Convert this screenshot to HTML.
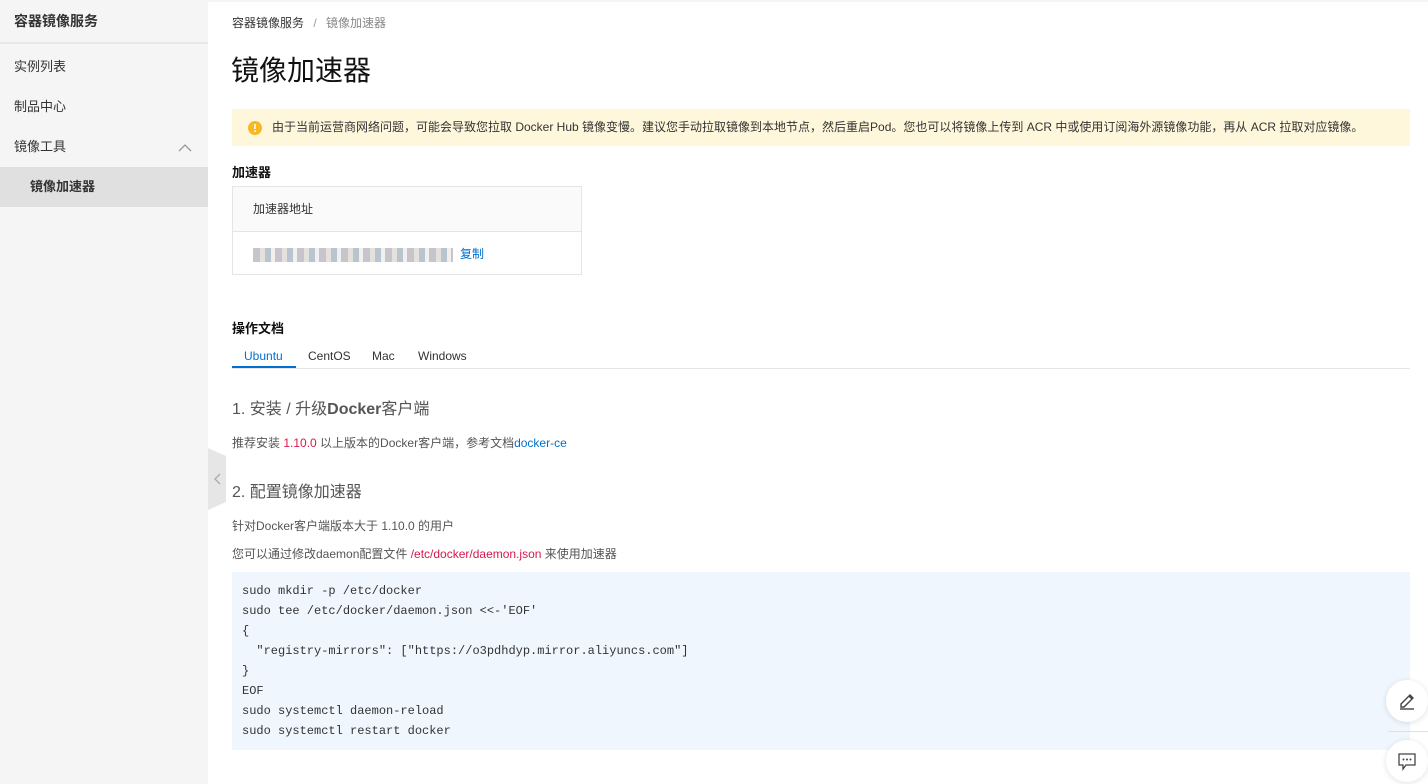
<!DOCTYPE html>
<html><head><meta charset="utf-8"><style>
*{margin:0;padding:0;box-sizing:border-box}
body{width:1428px;height:784px;overflow:hidden;background:#fff;font-family:"Liberation Sans","Noto Sans CJK SC",sans-serif;color:#333;position:relative}
.side{position:absolute;left:0;top:0;width:208px;height:784px;background:#f5f5f5}
.side .t{height:44px;line-height:42px;padding-left:14px;font-size:14px;font-weight:bold;color:#333;border-bottom:2px solid #e8e8e8}
.side .i{height:40px;line-height:40px;padding-left:14px;font-size:13px;color:#333;position:relative}
.side .a{background:#e0e0e0;padding-left:30px;font-weight:bold}
.abs{position:absolute}
.tab{position:absolute;top:349px;font-size:12px;color:#333}
.code{position:absolute;left:232px;top:572px;width:1178px;height:178px;background:#eff6fe;padding:9px 10px;font-family:"Liberation Mono",monospace;font-size:12px;line-height:20px;color:#333;white-space:pre}
</style></head><body>
<div class="abs" style="left:0;top:0;width:1428px;height:2px;background:#f5f5f5"></div>
<div class="side">
<div class="t">容器镜像服务</div>
<div class="i" style="margin-top:3px">实例列表</div>
<div class="i">制品中心</div>
<div class="i">镜像工具<svg style="position:absolute;left:178px;top:16px" width="14" height="9" viewBox="0 0 14 9"><path d="M1 8L7 2L13 8" fill="none" stroke="#999" stroke-width="1.3"/></svg></div>
<div class="i a">镜像加速器</div>
</div>
<svg class="abs" style="left:208px;top:448px" width="19" height="62" viewBox="0 0 19 62"><path d="M0 0L18 8V54L0 62Z" fill="#e6e6e6"/><path d="M12 26L7 31L12 36" fill="none" stroke="#aaa" stroke-width="1.3"/></svg>

<div class="abs" style="left:232px;top:14px;font-size:12px;color:#333">容器镜像服务 <span style="color:#999;margin:0 6px">/</span> <span style="color:#888">镜像加速器</span></div>
<div class="abs" style="left:231px;top:49px;font-size:28px;color:#111">镜像加速器</div>

<div class="abs" style="left:232px;top:109px;width:1178px;height:37px;background:#fff7dc;font-size:12px;line-height:37px;padding-left:40px;color:#333">由于当前运营商网络问题，可能会导致您拉取 Docker Hub 镜像变慢。建议您手动拉取镜像到本地节点，然后重启Pod。您也可以将镜像上传到 ACR 中或使用订阅海外源镜像功能，再从 ACR 拉取对应镜像。</div>
<svg class="abs" style="left:248px;top:121px" width="14" height="14" viewBox="0 0 14 14"><circle cx="7" cy="7" r="7" fill="#f8b823"/><rect x="6.2" y="3" width="1.6" height="5" fill="#fff"/><rect x="6.2" y="9.3" width="1.6" height="1.6" fill="#fff"/></svg>

<div class="abs" style="left:232px;top:162px;font-size:13px;font-weight:bold;color:#111">加速器</div>
<div class="abs" style="left:232px;top:186px;width:350px;height:89px;border:1px solid #e5e5e5">
<div style="height:45px;background:#fafafa;border-bottom:1px solid #e5e5e5;line-height:45px;padding-left:20px;font-size:12px;color:#333">加速器地址</div>
<div style="height:42px;padding:13px 0 0 20px;font-size:12px;white-space:nowrap">
<span style="display:inline-block;vertical-align:middle;width:200px;height:14px;background:repeating-linear-gradient(90deg,#c8c4cc 0 7px,#e4e0dc 7px 12px,#b8c4d0 12px 18px,#f2f0ee 18px 22px)"></span><span style="color:#0070cc;margin-left:7px">复制</span></div>
</div>

<div class="abs" style="left:232px;top:318px;font-size:13px;font-weight:bold;color:#111">操作文档</div>
<div class="tab" style="left:244px;color:#0070cc">Ubuntu</div>
<div class="tab" style="left:308px">CentOS</div>
<div class="tab" style="left:372px">Mac</div>
<div class="tab" style="left:418px">Windows</div>
<div class="abs" style="left:232px;top:368px;width:1178px;height:1px;background:#e5e5e5"></div>
<div class="abs" style="left:232px;top:366px;width:64px;height:2px;background:#0070cc"></div>

<div class="abs" style="left:232px;top:395px;font-size:16px;color:#555">1. 安装 / 升级<b>Docker</b>客户端</div>
<div class="abs" style="left:232px;top:434px;font-size:12px;color:#555">推荐安装 <span style="color:#d9184b">1.10.0</span> 以上版本的Docker客户端，参考文档<span style="color:#0070cc">docker-ce</span></div>
<div class="abs" style="left:232px;top:478px;font-size:16px;color:#555">2. 配置镜像加速器</div>
<div class="abs" style="left:232px;top:517px;font-size:12px;color:#555">针对Docker客户端版本大于 1.10.0 的用户</div>
<div class="abs" style="left:232px;top:545px;font-size:12px;color:#555">您可以通过修改daemon配置文件 <span style="color:#d9184b">/etc/docker/daemon.json</span> 来使用加速器</div>
<div class="code">sudo mkdir -p /etc/docker
sudo tee /etc/docker/daemon.json &lt;&lt;-'EOF'
{
  "registry-mirrors": ["https://o3pdhdyp.mirror.aliyuncs.com"]
}
EOF
sudo systemctl daemon-reload
sudo systemctl restart docker</div>

<div class="abs" style="left:1386px;top:680px;width:42px;height:42px;border-radius:50%;background:#fff;box-shadow:0 1px 6px rgba(0,0,0,.12)"></div>
<svg class="abs" style="left:1397px;top:690px" width="20" height="20" viewBox="0 0 20 20"><path d="M4 14L13 5L16 8L7 17H4Z M12 6L15 9" fill="none" stroke="#444" stroke-width="1.4"/><path d="M3 19H17" stroke="#444" stroke-width="1.4"/></svg>
<div class="abs" style="left:1388px;top:731px;width:40px;height:1px;background:#e0e0e0"></div>
<div class="abs" style="left:1386px;top:740px;width:42px;height:42px;border-radius:50%;background:#fff;box-shadow:0 1px 6px rgba(0,0,0,.12)"></div>
<svg class="abs" style="left:1397px;top:751px" width="20" height="20" viewBox="0 0 20 20"><path d="M2 3H18V14H9L6 18V14H2Z" fill="none" stroke="#444" stroke-width="1.3"/><circle cx="6.5" cy="8.5" r="1" fill="#444"/><circle cx="10" cy="8.5" r="1" fill="#444"/><circle cx="13.5" cy="8.5" r="1" fill="#444"/></svg>
</body></html>
